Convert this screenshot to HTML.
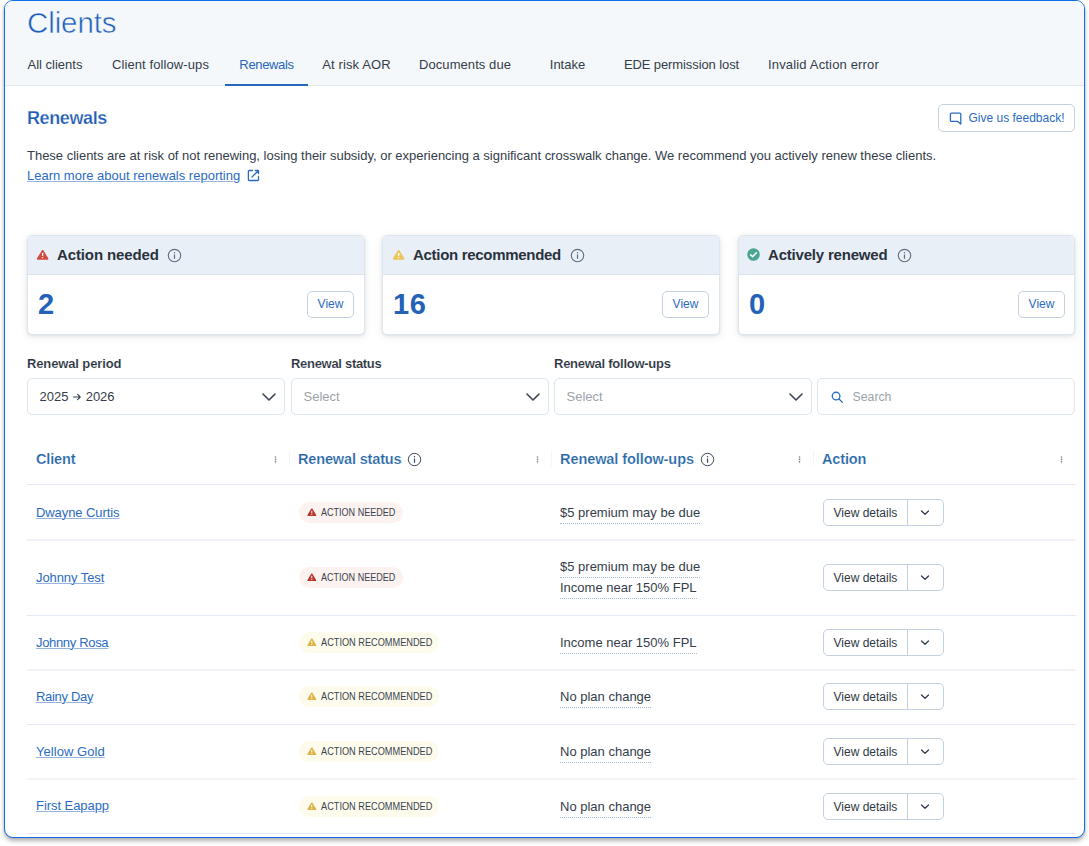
<!DOCTYPE html>
<html lang="en">
<head>
<meta charset="utf-8">
<title>Clients - Renewals</title>
<style>
*{box-sizing:border-box;margin:0;padding:0}
html,body{width:1089px;height:846px;overflow:hidden;background:#fff}
body{font-family:"Liberation Sans",sans-serif;font-size:13px;color:#343d49;position:relative}
a{color:#2b6bc2;text-decoration:underline;text-underline-offset:1px;text-decoration-thickness:1px;text-decoration-color:rgba(43,107,194,.5)}
.frame{position:absolute;left:4px;top:0;width:1081px;height:838px;border:1px solid #0f6fe8;border-radius:9px;background:#fff;overflow:hidden;box-shadow:0 3px 4px rgba(0,0,0,.30),0 0 2px rgba(60,40,20,.14)}
.in{position:absolute;left:0;top:-1px;width:1079px;height:838px}
.abs{position:absolute;white-space:nowrap}
/* header */
.top{position:absolute;left:0;top:0;width:100%;height:86px;background:#f5f8fb;border-bottom:1px solid #e1e8ee}
.title{left:22px;top:3px;font-size:29.5px;line-height:40px;color:#1f5fba;letter-spacing:-.1px;-webkit-text-stroke:.55px #f5f8fb}
.tab{top:52px;height:34px;line-height:25px;font-size:13px;color:#343d49;text-align:center}
.tab.on{color:#2766bd;border-bottom:2px solid #2766bd}
/* intro */
.h2{left:22px;top:106px;font-size:18px;font-weight:700;line-height:24px;color:#1f5cb4;letter-spacing:-.4px;-webkit-text-stroke:.25px #fff}
.fb{left:933px;top:104px;width:137px;height:28px;border:1px solid #c3d1df;border-radius:5px;background:#fff;color:#2b6bc2;font-size:12px;line-height:26px}
.fb span{position:absolute;left:29.5px;top:0}
.fb svg{position:absolute;left:10px;top:7px}
.desc{left:22px;top:146px;line-height:19px;letter-spacing:-.01px}
.learn{left:22px;top:167px;line-height:18px}
.ext{left:242px;top:169px}
/* cards */
.card{position:absolute;top:235px;width:338px;height:100px;border:1px solid #dde5ee;border-radius:5px;background:#fff;box-shadow:0 1px 3px rgba(40,50,70,.10),0 2px 10px rgba(40,50,70,.09);overflow:hidden}
.card .hd{position:absolute;left:0;top:0;width:100%;height:39px;background:#e9eff6;border-bottom:1px solid #dbe4ed}
.card .ttl{left:29px;top:9px;font-size:15px;font-weight:700;line-height:20px;color:#2a323d;letter-spacing:-.12px}
.card .num{left:10px;top:48px;font-size:29px;font-weight:700;line-height:40px;color:#2462b8}
.card .view{left:279px;top:55px;width:47px;height:27px;border:1px solid #c3d1df;border-radius:5px;color:#2b6bc2;font-size:12px;line-height:24px;text-align:center}
.card .ic{position:absolute;left:8px;top:14px}
.card .info{position:absolute;top:12px}
/* filters */
.lbl{top:355px;font-weight:700;line-height:18px;color:#2b3440;-webkit-text-stroke:.12px #fff}
.sel{position:absolute;top:378px;height:37px;width:258px;border:1px solid #dce5ee;border-radius:5px;background:#fff;line-height:36px}
.sel span{position:absolute;left:11.5px;top:0;white-space:nowrap}
.sel .ph{color:#9ca3ab}
.sel svg.chev{position:absolute;right:7px;top:12px}
/* table */
.th{top:448px;font-size:14.5px;font-weight:700;line-height:22px;color:#2466a6;letter-spacing:-.15px;-webkit-text-stroke:.2px #fff}
.hline{position:absolute;left:22px;width:1049px;height:1px;background:#e3eaf1}
.hline.s{height:2px;background:#f0f4f8}
.keb{position:absolute;top:456px;width:3px;height:7px}
.vsep{position:absolute;top:451px;width:1px;height:15px;background:#f3f6f9}
.name{left:31px;line-height:18px}
.pill{left:294px;height:21px;border-radius:11px;font-size:9.8px;line-height:21px;color:#3b4450;padding:0 0 0 21.5px}
.pill span{display:inline-block;transform-origin:0 50%;font-size:10.4px;white-space:nowrap}
.pill.red span{transform:scaleX(.87)}
.pill.yel span{transform:scaleX(.885)}
.pill.red{background:#fcf2ef;width:104px}
.pill.yel{background:#fdfbec;width:140px}
.pill svg{position:absolute;left:8px;top:6px}
.fu{left:555px;line-height:17px;border-bottom:1px dotted #a6bad3;padding-bottom:2px}
.btn{position:absolute;left:818px;width:121px;height:27px;border:1px solid #c3d1df;border-radius:5px;background:#fff;font-size:12px;line-height:26px;color:#2f3945}
.btn span{position:absolute;left:9.5px;top:0;white-space:nowrap}
.btn b{position:absolute;left:83px;top:0;width:1px;height:25px;background:#c3d1df}
.btn svg{position:absolute;left:96px;top:9px}
</style>
</head>
<body>
<div class="frame">
<div class="in">
  <div class="top">
    <div class="abs title">Clients</div>
    <div class="abs tab" style="left:8px;width:84px">All clients</div>
    <div class="abs tab" style="left:92px;width:127px;letter-spacing:.1px">Client follow-ups</div>
    <div class="abs tab on" style="left:220px;width:83px;letter-spacing:-.35px">Renewals</div>
    <div class="abs tab" style="left:303px;width:97px;letter-spacing:.12px">At risk AOR</div>
    <div class="abs tab" style="left:400px;width:120px;letter-spacing:.07px">Documents due</div>
    <div class="abs tab" style="left:526px;width:73px">Intake</div>
    <div class="abs tab" style="left:605px;width:143px;letter-spacing:-.1px">EDE permission lost</div>
    <div class="abs tab" style="left:749px;width:139px;letter-spacing:.17px">Invalid Action error</div>
  </div>

  <div class="abs h2">Renewals</div>
  <div class="abs fb"><svg width="13" height="13" viewBox="0 0 13 13" fill="none" stroke="#2b6bc2" stroke-width="1.3" stroke-linejoin="round"><path d="M2.3 1.2h8.6a.9.9 0 0 1 .9.9V12L8.4 9.3H2.3a.9.9 0 0 1-.9-.9V2.1a.9.9 0 0 1 .9-.9z"/></svg><span>Give us feedback!</span></div>
  <div class="abs desc">These clients are at risk of not renewing, losing their subsidy, or experiencing a significant crosswalk change. We recommend you actively renew these clients.</div>
  <a class="abs learn">Learn more about renewals reporting</a>
  <svg class="abs ext" width="13" height="13" viewBox="0 0 13 13" fill="none" stroke="#2b6bc2" stroke-width="1.3" stroke-linecap="round" stroke-linejoin="round"><path d="M5.5 1.5H2.2a.8.8 0 0 0-.8.8v8.4c0 .5.4.8.8.8h8.5c.4 0 .8-.3.8-.8V7.5"/><path d="M8.3 1.5h3.2v3.2M11.3 1.7L4.9 8.1"/></svg>

  <!-- cards -->
  <div class="card" style="left:22px">
    <div class="hd"></div>
    <svg class="ic" width="12" height="10.5" viewBox="-0.65 0.5 12 10.5" style="overflow:visible"><path d="M6 1.3L10.9 9.3H1.1z" fill="#d44c40" stroke="#d44c40" stroke-width="1.7" stroke-linejoin="round"/><rect x="5.4" y="3.3" width="1.2" height="3.3" rx=".4" fill="#fff"/><rect x="5.4" y="7.4" width="1.2" height="1.3" rx=".4" fill="#fff"/></svg>
    <div class="abs ttl">Action needed</div>
    <svg class="info" style="left:139px" width="15" height="15" viewBox="0 0 15 15" fill="none"><circle cx="7.5" cy="7.5" r="6.2" stroke="#5f6f80" stroke-width="1.15"/><rect x="6.9" y="6.5" width="1.2" height="4.3" fill="#5f6f80"/><rect x="6.9" y="4.1" width="1.2" height="1.3" fill="#5f6f80"/></svg>
    <div class="abs num">2</div>
    <div class="abs view">View</div>
  </div>
  <div class="card" style="left:377px;width:338px">
    <div class="hd"></div>
    <svg class="ic" width="12" height="10.5" viewBox="-0.65 0.5 12 10.5" style="overflow:visible;left:9px"><path d="M6 1.3L10.9 9.3H1.1z" fill="#ecc45c" stroke="#ecc45c" stroke-width="1.7" stroke-linejoin="round"/><rect x="5.4" y="3.3" width="1.2" height="3.3" rx=".4" fill="#fff"/><rect x="5.4" y="7.4" width="1.2" height="1.3" rx=".4" fill="#fff"/></svg>
    <div class="abs ttl" style="left:30px;letter-spacing:-.3px">Action recommended</div>
    <svg class="info" style="left:187px" width="15" height="15" viewBox="0 0 15 15" fill="none"><circle cx="7.5" cy="7.5" r="6.2" stroke="#5f6f80" stroke-width="1.15"/><rect x="6.9" y="6.5" width="1.2" height="4.3" fill="#5f6f80"/><rect x="6.9" y="4.1" width="1.2" height="1.3" fill="#5f6f80"/></svg>
    <div class="abs num" style="left:10px;letter-spacing:.6px">16</div>
    <div class="abs view">View</div>
  </div>
  <div class="card" style="left:733px;width:337px">
    <div class="hd"></div>
    <svg class="ic" width="13" height="13" viewBox="0 0 13 13" style="top:12px;left:8px"><circle cx="6.5" cy="6.5" r="6.3" fill="#4aa592"/><path d="M3.6 6.7l2 2 3.8-4" stroke="#fff" stroke-width="1.5" fill="none" stroke-linecap="round" stroke-linejoin="round"/></svg>
    <div class="abs ttl" style="letter-spacing:-.2px">Actively renewed</div>
    <svg class="info" style="left:158px" width="15" height="15" viewBox="0 0 15 15" fill="none"><circle cx="7.5" cy="7.5" r="6.2" stroke="#5f6f80" stroke-width="1.15"/><rect x="6.9" y="6.5" width="1.2" height="4.3" fill="#5f6f80"/><rect x="6.9" y="4.1" width="1.2" height="1.3" fill="#5f6f80"/></svg>
    <div class="abs num">0</div>
    <div class="abs view">View</div>
  </div>

  <!-- filters -->
  <div class="abs lbl" style="left:22px;letter-spacing:-.13px">Renewal period</div>
  <div class="abs lbl" style="left:286px;letter-spacing:-.3px">Renewal status</div>
  <div class="abs lbl" style="left:549px;letter-spacing:-.26px">Renewal follow-ups</div>
  <div class="sel" style="left:22px"><span>2025 <svg width="8" height="8" viewBox="0 0 8 8" fill="none" stroke="#343d49" stroke-width="1.1" stroke-linecap="round" stroke-linejoin="round" style="margin:0 1px 0 1px"><path d="M.6 4h6.6M4.6 1.4L7.2 4 4.6 6.6"/></svg> 2026</span><svg class="chev" width="16" height="12" viewBox="0 0 16 12" fill="none" stroke="#3b4450" stroke-width="1.6" stroke-linecap="round" stroke-linejoin="round"><path d="M2 3l6 6 6-6"/></svg></div>
  <div class="sel" style="left:286px"><span class="ph">Select</span><svg class="chev" width="16" height="12" viewBox="0 0 16 12" fill="none" stroke="#3b4450" stroke-width="1.6" stroke-linecap="round" stroke-linejoin="round"><path d="M2 3l6 6 6-6"/></svg></div>
  <div class="sel" style="left:549px"><span class="ph">Select</span><svg class="chev" width="16" height="12" viewBox="0 0 16 12" fill="none" stroke="#3b4450" stroke-width="1.6" stroke-linecap="round" stroke-linejoin="round"><path d="M2 3l6 6 6-6"/></svg></div>
  <div class="sel" style="left:812px"><svg style="position:absolute;left:13px;top:12px" width="12.5" height="12.5" viewBox="0 0 13 13" fill="none" stroke="#2b6bc2" stroke-width="1.35" stroke-linecap="round"><circle cx="5.3" cy="5.3" r="4"/><path d="M8.4 8.4l3.4 3.4"/></svg><span class="ph" style="left:34.5px;font-size:12.3px">Search</span></div>

  <!-- table header -->
  <div class="abs th" style="left:31px">Client</div>
  <div class="abs th" style="left:293px">Renewal status</div>
  <div class="abs th" style="left:555px;letter-spacing:-.08px">Renewal follow-ups</div>
  <div class="abs th" style="left:817px">Action</div>
  <svg class="abs" style="left:402px;top:452px" width="15" height="15" viewBox="0 0 15 15" fill="none"><circle cx="7.5" cy="7.5" r="6.2" stroke="#3b4a5c" stroke-width="1"/><rect x="6.9" y="6.5" width="1.2" height="4.3" fill="#3b4a5c"/><rect x="6.9" y="4.1" width="1.2" height="1.3" fill="#3b4a5c"/></svg>
  <svg class="abs" style="left:694.5px;top:452px" width="15" height="15" viewBox="0 0 15 15" fill="none"><circle cx="7.5" cy="7.5" r="6.2" stroke="#3b4a5c" stroke-width="1"/><rect x="6.9" y="6.5" width="1.2" height="4.3" fill="#3b4a5c"/><rect x="6.9" y="4.1" width="1.2" height="1.3" fill="#3b4a5c"/></svg>
  <div class="keb" style="left:268.5px"><svg width="3" height="7" viewBox="0 0 3 7" style="display:block"><circle cx="1.5" cy="1" r=".85" fill="#7d8995"/><circle cx="1.5" cy="3.4" r=".85" fill="#7d8995"/><circle cx="1.5" cy="5.8" r=".85" fill="#7d8995"/></svg></div>
  <div class="keb" style="left:530.5px"><svg width="3" height="7" viewBox="0 0 3 7" style="display:block"><circle cx="1.5" cy="1" r=".85" fill="#7d8995"/><circle cx="1.5" cy="3.4" r=".85" fill="#7d8995"/><circle cx="1.5" cy="5.8" r=".85" fill="#7d8995"/></svg></div>
  <div class="keb" style="left:792.5px"><svg width="3" height="7" viewBox="0 0 3 7" style="display:block"><circle cx="1.5" cy="1" r=".85" fill="#7d8995"/><circle cx="1.5" cy="3.4" r=".85" fill="#7d8995"/><circle cx="1.5" cy="5.8" r=".85" fill="#7d8995"/></svg></div>
  <div class="keb" style="left:1054.5px"><svg width="3" height="7" viewBox="0 0 3 7" style="display:block"><circle cx="1.5" cy="1" r=".85" fill="#7d8995"/><circle cx="1.5" cy="3.4" r=".85" fill="#7d8995"/><circle cx="1.5" cy="5.8" r=".85" fill="#7d8995"/></svg></div>
  <div class="vsep" style="left:284px"></div>
  <div class="vsep" style="left:546px"></div>
  <div class="vsep" style="left:808px"></div>
  <div class="hline" style="top:484px"></div>

  <a class="abs name" style="top:504px;letter-spacing:-0.08px">Dwayne Curtis</a>
  <div class="abs pill red" style="top:502px"><svg width="9.6" height="8.5" viewBox="0 0 9 8"><path d="M4.5 1.1L8 6.9H1z" fill="#b5382e" stroke="#b5382e" stroke-width="1.4" stroke-linejoin="round"/><rect x="4.05" y="2.6" width=".9" height="2.4" fill="#fff"/><rect x="4.05" y="5.6" width=".9" height=".9" fill="#fff"/></svg><span>ACTION NEEDED</span></div>
  <div class="abs fu" style="top:504px">$5 premium may be due</div>
  <div class="btn" style="top:499px"><span>View details</span><b></b><svg width="10" height="8" viewBox="0 0 10 8" fill="none" stroke="#2f3945" stroke-width="1.25" stroke-linecap="round" stroke-linejoin="round"><path d="M1.5 2l3.5 3.3L8.5 2"/></svg></div>
  <div class="hline s" style="top:539px"></div>
  <a class="abs name" style="top:569px;letter-spacing:-0.08px">Johnny Test</a>
  <div class="abs pill red" style="top:567px"><svg width="9.6" height="8.5" viewBox="0 0 9 8"><path d="M4.5 1.1L8 6.9H1z" fill="#b5382e" stroke="#b5382e" stroke-width="1.4" stroke-linejoin="round"/><rect x="4.05" y="2.6" width=".9" height="2.4" fill="#fff"/><rect x="4.05" y="5.6" width=".9" height=".9" fill="#fff"/></svg><span>ACTION NEEDED</span></div>
  <div class="abs fu" style="top:558px">$5 premium may be due</div>
  <div class="abs fu" style="top:579px">Income near 150% FPL</div>
  <div class="btn" style="top:564px"><span>View details</span><b></b><svg width="10" height="8" viewBox="0 0 10 8" fill="none" stroke="#2f3945" stroke-width="1.25" stroke-linecap="round" stroke-linejoin="round"><path d="M1.5 2l3.5 3.3L8.5 2"/></svg></div>
  <div class="hline" style="top:615px"></div>
  <a class="abs name" style="top:634px;letter-spacing:-0.33px">Johnny Rosa</a>
  <div class="abs pill yel" style="top:632px"><svg width="9.6" height="8.5" viewBox="0 0 9 8"><path d="M4.5 1.1L8 6.9H1z" fill="#deb347" stroke="#deb347" stroke-width="1.4" stroke-linejoin="round"/><rect x="4.05" y="2.6" width=".9" height="2.4" fill="#fff"/><rect x="4.05" y="5.6" width=".9" height=".9" fill="#fff"/></svg><span>ACTION RECOMMENDED</span></div>
  <div class="abs fu" style="top:634px">Income near 150% FPL</div>
  <div class="btn" style="top:629px"><span>View details</span><b></b><svg width="10" height="8" viewBox="0 0 10 8" fill="none" stroke="#2f3945" stroke-width="1.25" stroke-linecap="round" stroke-linejoin="round"><path d="M1.5 2l3.5 3.3L8.5 2"/></svg></div>
  <div class="hline s" style="top:669px"></div>
  <a class="abs name" style="top:688px;letter-spacing:-0.32px">Rainy Day</a>
  <div class="abs pill yel" style="top:686px"><svg width="9.6" height="8.5" viewBox="0 0 9 8"><path d="M4.5 1.1L8 6.9H1z" fill="#deb347" stroke="#deb347" stroke-width="1.4" stroke-linejoin="round"/><rect x="4.05" y="2.6" width=".9" height="2.4" fill="#fff"/><rect x="4.05" y="5.6" width=".9" height=".9" fill="#fff"/></svg><span>ACTION RECOMMENDED</span></div>
  <div class="abs fu" style="top:688px">No plan change</div>
  <div class="btn" style="top:683px"><span>View details</span><b></b><svg width="10" height="8" viewBox="0 0 10 8" fill="none" stroke="#2f3945" stroke-width="1.25" stroke-linecap="round" stroke-linejoin="round"><path d="M1.5 2l3.5 3.3L8.5 2"/></svg></div>
  <div class="hline" style="top:724px"></div>
  <a class="abs name" style="top:743px;letter-spacing:0.05px">Yellow Gold</a>
  <div class="abs pill yel" style="top:741px"><svg width="9.6" height="8.5" viewBox="0 0 9 8"><path d="M4.5 1.1L8 6.9H1z" fill="#deb347" stroke="#deb347" stroke-width="1.4" stroke-linejoin="round"/><rect x="4.05" y="2.6" width=".9" height="2.4" fill="#fff"/><rect x="4.05" y="5.6" width=".9" height=".9" fill="#fff"/></svg><span>ACTION RECOMMENDED</span></div>
  <div class="abs fu" style="top:743px">No plan change</div>
  <div class="btn" style="top:738px"><span>View details</span><b></b><svg width="10" height="8" viewBox="0 0 10 8" fill="none" stroke="#2f3945" stroke-width="1.25" stroke-linecap="round" stroke-linejoin="round"><path d="M1.5 2l3.5 3.3L8.5 2"/></svg></div>
  <div class="hline s" style="top:778px"></div>
  <a class="abs name" style="top:797px;letter-spacing:-0.06px">First Eapapp</a>
  <div class="abs pill yel" style="top:796px"><svg width="9.6" height="8.5" viewBox="0 0 9 8"><path d="M4.5 1.1L8 6.9H1z" fill="#deb347" stroke="#deb347" stroke-width="1.4" stroke-linejoin="round"/><rect x="4.05" y="2.6" width=".9" height="2.4" fill="#fff"/><rect x="4.05" y="5.6" width=".9" height=".9" fill="#fff"/></svg><span>ACTION RECOMMENDED</span></div>
  <div class="abs fu" style="top:798px">No plan change</div>
  <div class="btn" style="top:793px"><span>View details</span><b></b><svg width="10" height="8" viewBox="0 0 10 8" fill="none" stroke="#2f3945" stroke-width="1.25" stroke-linecap="round" stroke-linejoin="round"><path d="M1.5 2l3.5 3.3L8.5 2"/></svg></div>
  <div class="hline" style="top:833px"></div>
</div>
</div>
</body>
</html>
